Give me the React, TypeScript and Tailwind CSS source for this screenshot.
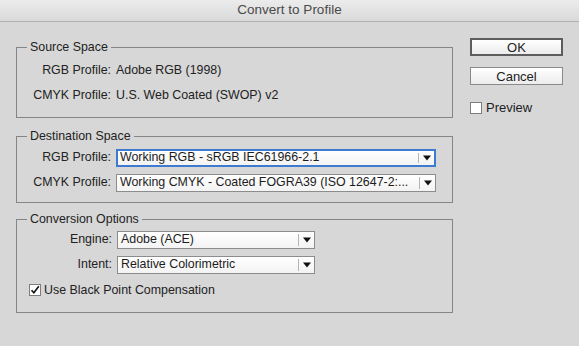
import type { ReactNode } from "react"

const font = { fontFamily: '"Liberation Sans", Arial, sans-serif' }

function Arrow() {
  return (
    <svg width="8" height="6" viewBox="0 0 8 6" className="block">
      <path d="M0 0.5h8L4 5.5z" fill="#111" />
    </svg>
  )
}

function Select({
  value,
  width,
  focused = false,
}: {
  value: string
  width: string
  focused?: boolean
}) {
  return (
    <div
      className={`flex h-[18px] items-stretch bg-gradient-to-b from-white to-[#f3f3f3] ${width} ${
        focused
          ? "border-2 border-[#3d7bd0]"
          : "border border-[#8c8c8c]"
      }`}
    >
      <div className={`flex flex-1 items-center truncate ${focused ? "pl-[2px]" : "pl-[3px]"} text-[#1c1c1c]`}>
        {value}
      </div>
      <div className="my-[2px] w-px bg-[#b5b5b5]" />
      <div className="flex w-[15px] items-center justify-center">
        <Arrow />
      </div>
    </div>
  )
}

function Group({ title, children, className = "" }: { title: string; children: ReactNode; className?: string }) {
  return (
    <fieldset className={`border border-[#858585] ${className}`}>
      <legend className="ml-[10px] px-[3px] leading-[16px] text-[#222]">{title}</legend>
      {children}
    </fieldset>
  )
}

function Row({ label, labelWidth, children }: { label: string; labelWidth: string; children: ReactNode }) {
  return (
    <div className="flex h-[25px] items-center gap-[5px]">
      <div className={`${labelWidth} text-right text-[#222]`}>{label}</div>
      {children}
    </div>
  )
}

function Checkbox({ checked = false }: { checked?: boolean }) {
  return (
    <div className="flex h-[12px] w-[12px] items-center justify-center border border-[#7d7d7d] bg-white">
      {checked && (
        <svg width="10" height="10" viewBox="0 0 10 10">
          <path d="M1.5 5.2l2.4 2.6L8.8 1.2" fill="none" stroke="#111" strokeWidth="1.6" />
        </svg>
      )}
    </div>
  )
}

export default function App() {
  return (
    <div className="h-[346px] w-[579px] overflow-hidden bg-[#d7d7d7] text-[12.4px]" style={font}>
      <header className="flex h-[22px] items-center justify-center border-b border-[#b1b1b1] bg-gradient-to-b from-[#ececec] to-[#d9d9d9] text-[13.5px] text-[#4a4a4a]">
        Convert to Profile
      </header>

      <div className="flex items-start pt-[16px]">
        <div className="ml-[16px] mt-px flex w-[437px] flex-col">
          <Group title="Source Space">
            <div className="pb-[9px] pt-[3px]">
              <Row label="RGB Profile:" labelWidth="w-[94px]">
                <span className="text-[#222]">Adobe RGB (1998)</span>
              </Row>
              <Row label="CMYK Profile:" labelWidth="w-[94px]">
                <span className="text-[#222]">U.S. Web Coated (SWOP) v2</span>
              </Row>
            </div>
          </Group>

          <Group title="Destination Space" className="mt-[10px]">
            <div className="pb-[7px] pt-px">
              <Row label="RGB Profile:" labelWidth="w-[94px]">
                <Select value="Working RGB - sRGB IEC61966-2.1" width="w-[320px]" focused />
              </Row>
              <Row label="CMYK Profile:" labelWidth="w-[94px]">
                <Select value="Working CMYK - Coated FOGRA39 (ISO 12647-2:..." width="w-[320px]" />
              </Row>
            </div>
          </Group>

          <Group title="Conversion Options" className="mt-[8px]">
            <div className="pb-[9px]">
              <Row label="Engine:" labelWidth="w-[95px]">
                <Select value="Adobe (ACE)" width="w-[198px]" />
              </Row>
              <Row label="Intent:" labelWidth="w-[95px]">
                <Select value="Relative Colorimetric" width="w-[198px]" />
              </Row>
              <div className="flex h-[26px] items-center gap-[3px] pl-[12px] text-[#222]">
                <Checkbox checked />
                <span>Use Black Point Compensation</span>
              </div>
            </div>
          </Group>
        </div>

        <div className="ml-[17px] flex w-[93px] flex-col">
          <button className="h-[18px] border-2 border-[#5d5d5d] bg-gradient-to-b from-white to-[#ececec] text-[13px] leading-none text-[#222]">
            OK
          </button>
          <button className="mt-[11px] h-[18px] border border-[#8a8a8a] bg-gradient-to-b from-white to-[#ececec] text-[13px] leading-none text-[#222]">
            Cancel
          </button>
          <div className="mt-[13px] flex items-center gap-[4px] text-[#222]">
            <Checkbox />
            <span className="text-[13px]">Preview</span>
          </div>
        </div>
      </div>
    </div>
  )
}
